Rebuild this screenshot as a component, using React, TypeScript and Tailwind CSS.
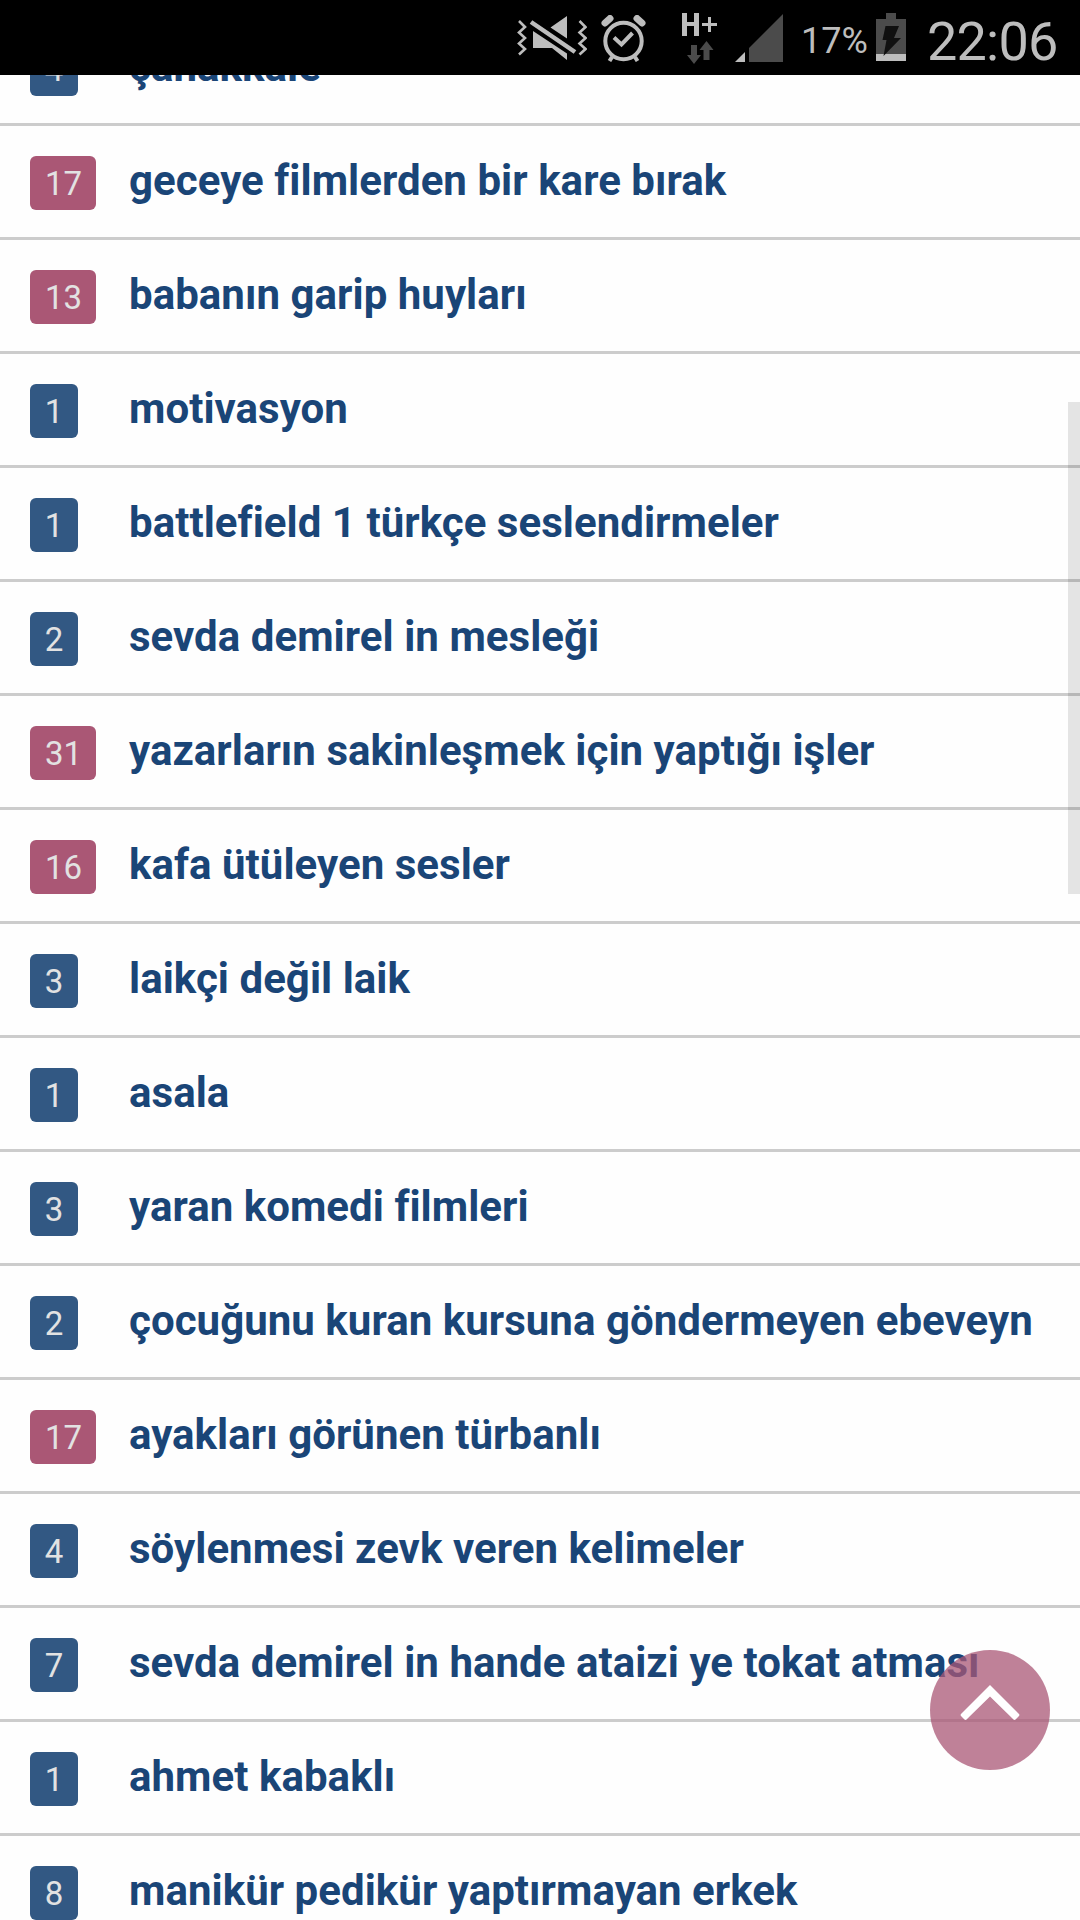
import { clsx } from 'clsx';

interface Topic {
  count: number;
  title: string;
}

const topics: Topic[] = [
  { count: 4, title: 'çanakkale' },
  { count: 17, title: 'geceye filmlerden bir kare bırak' },
  { count: 13, title: 'babanın garip huyları' },
  { count: 1, title: 'motivasyon' },
  { count: 1, title: 'battlefield 1 türkçe seslendirmeler' },
  { count: 2, title: 'sevda demirel in mesleği' },
  { count: 31, title: 'yazarların sakinleşmek için yaptığı işler' },
  { count: 16, title: 'kafa ütüleyen sesler' },
  { count: 3, title: 'laikçi değil laik' },
  { count: 1, title: 'asala' },
  { count: 3, title: 'yaran komedi filmleri' },
  { count: 2, title: 'çocuğunu kuran kursuna göndermeyen ebeveyn' },
  { count: 17, title: 'ayakları görünen türbanlı' },
  { count: 4, title: 'söylenmesi zevk veren kelimeler' },
  { count: 7, title: 'sevda demirel in hande ataizi ye tokat atması' },
  { count: 1, title: 'ahmet kabaklı' },
  { count: 8, title: 'manikür pedikür yaptırmayan erkek' },
];

function MutedIcon() {
  return (
    <svg className="mt-4 h-[46px] w-[70px] shrink-0" viewBox="0 0 70 46" fill="none">
      <g stroke="#bdbdbd" strokeWidth="2.6">
        <path d="M2 5l6 6-6 5.500 6 5.500-6 5.500 6 5.500-6 5.500" />
        <path d="M62.500 5l6 6-6 5.500 6 5.500-6 5.500 6 5.500-6 5.500" />
      </g>
      <path d="M50 0v22.500L33.500 11.500zM16 15l34 22.500V44L35 32H16z" fill="#bdbdbd" />
      <path d="M14 6l44 30" stroke="#bdbdbd" strokeWidth="4.500" />
    </svg>
  );
}

function AlarmIcon() {
  return (
    <svg className="mt-[15px] ml-[14px] h-[47px] w-[45px] shrink-0" viewBox="0 0 45 47" fill="none" stroke="#bdbdbd">
      <circle cx="22.500" cy="26" r="18.200" strokeWidth="4" />
      <path d="M4 8L9 3.500M36 3.500L41 8" strokeWidth="7" strokeLinecap="round" />
      <path d="M11 42l-2.500 4M34 42l2.500 4" strokeWidth="4" />
      <path d="M13 22.500l7.500 7 11-11.500" strokeWidth="4" />
    </svg>
  );
}

function NetworkType() {
  return (
    <div className="mt-[9px] ml-[33px] flex w-10 shrink-0 flex-col">
      <svg className="h-8 w-10" viewBox="0 0 40 32" fill="none" stroke="#bdbdbd">
        <path d="M5.500 4v23M17.500 4v23" strokeWidth="5" />
        <path d="M5 15h13" strokeWidth="4" />
        <path d="M23 15.500h15M30.500 8v15" strokeWidth="3" />
      </svg>
      <svg className="h-6 w-10" viewBox="0 0 40 24" fill="#4b4b4b">
        <path d="M12 4h6v10h4L15 23 8 14h4z" />
        <path d="M27.500 0l7 9h-4v10h-6V9h-4z" />
      </svg>
    </div>
  );
}

function SignalIcon() {
  return (
    <svg className="mt-[14px] ml-4 h-12 w-12 shrink-0" viewBox="0 0 48 48">
      <path d="M48 0v48H14V34z" fill="#4b4b4b" />
      <path d="M0 48l10-10v10z" fill="#bdbdbd" />
    </svg>
  );
}

function BatteryIcon() {
  return (
    <svg className="mt-[13px] ml-2.5 h-12 w-[30px] shrink-0" viewBox="0 0 30 48">
      <path d="M10 0h10v6h10v35H0V6h10z" fill="#4b4b4b" />
      <path d="M0 41h30v7H0z" fill="#bdbdbd" />
      <path d="M9.500 13H23l-5 12h7L7.500 43l3-16H6.500z" fill="#101010" />
    </svg>
  );
}

function StatusBar() {
  return (
    <header className="relative z-10 flex h-[75px] justify-end bg-black pr-[23px] text-[#bdbdbd]">
      <MutedIcon />
      <AlarmIcon />
      <NetworkType />
      <SignalIcon />
      <span className="mt-5 ml-[18px] w-[65px] shrink-0 text-[36px] leading-[42px] whitespace-nowrap">17%</span>
      <BatteryIcon />
      <span className="mt-2.5 ml-[21px] w-[130px] shrink-0 text-[54px] leading-[64px] tracking-[-0.8px] whitespace-nowrap">
        22:06
      </span>
    </header>
  );
}

function TopicRow({ count, title }: Topic) {
  return (
    <li className="flex h-[114px] items-start border-b-3 border-[#cccccc] pl-[30px]">
      <div className="w-[99px] shrink-0 pt-[30px]">
        <span
          className={clsx(
            'flex h-[54px] items-center justify-center rounded-md text-[33px] leading-none text-[#e2e2e2]',
            count > 9 ? 'w-[66px] bg-[#aa5775] pl-px' : 'w-12 bg-[#325883]',
          )}
        >
          {count}
        </span>
      </div>
      <a className="pt-[30px] text-[42px] leading-[49px] font-bold tracking-[0.04px] whitespace-nowrap text-[#1a4577]">
        {title}
      </a>
    </li>
  );
}

export default function App() {
  return (
    <div className="relative h-[1920px] w-[1080px] overflow-hidden bg-[#fefefe] font-['Roboto',sans-serif]">
      <StatusBar />
      <ul className="-mt-[63px]">
        {topics.map((topic) => (
          <TopicRow key={topic.title} {...topic} />
        ))}
      </ul>

      {/* scrollbar thumb */}
      <div className="absolute top-[402px] right-0 h-[492px] w-3 bg-black/10" />

      {/* back to top */}
      <button
        type="button"
        aria-label="yukarı"
        className="absolute top-[1650px] right-[30px] flex size-[120px] items-start justify-center rounded-full bg-[#aa5775]/75 pt-[35px]"
      >
        <svg className="h-[36px] w-[60px]" viewBox="0 0 60 36" fill="#ffffff">
          <path d="M30 0L59 29Q59.800 30 59 31L55.500 34.500Q54.500 35.300 53.500 34.500L30 11.500 6.500 34.500Q5.500 35.300 4.500 34.500L1 31Q.2 30 1 29z" />
        </svg>
      </button>
    </div>
  );
}
